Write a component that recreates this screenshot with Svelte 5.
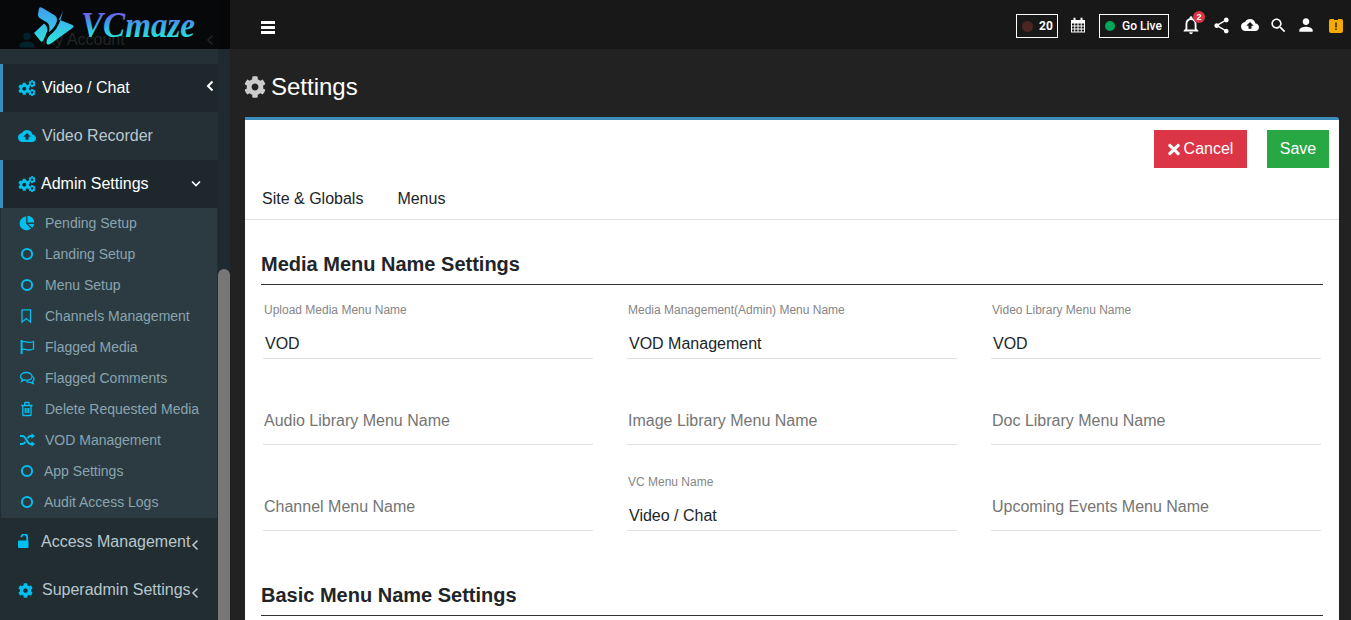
<script>
  const cog =
    "M487.4 315.7l-42.6-24.6c4.3-23.2 4.3-47 0-70.2l42.6-24.6c4.9-2.8 7.1-8.6 5.5-14-11.1-35.6-30-67.8-54.7-94.6-3.8-4.1-10-5.1-14.8-2.3L380.8 110c-17.9-15.4-38.5-27.3-60.8-35.1V25.8c0-5.6-3.9-10.5-9.4-11.7-36.7-8.2-74.3-7.8-109.2 0-5.5 1.2-9.4 6.1-9.4 11.7V75c-22.2 7.9-42.8 19.8-60.8 35.1L88.7 85.5c-4.9-2.8-11-1.9-14.8 2.3-24.7 26.7-43.6 58.9-54.7 94.6-1.7 5.4.6 11.2 5.5 14L67.3 221c-4.3 23.2-4.3 47 0 70.2l-42.6 24.6c-4.9 2.8-7.1 8.6-5.5 14 11.1 35.6 30 67.8 54.7 94.6 3.8 4.1 10 5.1 14.8 2.3l42.6-24.6c17.9 15.4 38.5 27.3 60.8 35.1v49.2c0 5.6 3.9 10.5 9.4 11.7 36.7 8.2 74.3 7.8 109.2 0 5.5-1.2 9.4-6.1 9.4-11.7v-49.2c22.2-7.9 42.8-19.8 60.8-35.1l42.6 24.6c4.9 2.8 11 1.9 14.8-2.3 24.7-26.7 43.6-58.9 54.7-94.6 1.5-5.5-.7-11.3-5.6-14.1zM256 336c-44.1 0-80-35.9-80-80s35.9-80 80-80 80 35.9 80 80-35.9 80-80 80z";
  const cloud =
    "M19.35 10.04C18.67 6.59 15.64 4 12 4 9.11 4 6.6 5.64 5.35 8.04 2.34 8.36 0 10.91 0 14c0 3.31 2.69 6 6 6h13c2.76 0 5-2.24 5-5 0-2.64-2.05-4.78-4.65-4.96zM14 13v4h-4v-4H7l5-5 5 5h-3z";

  const subItems = [
    { label: "Pending Setup", icon: "pie" },
    { label: "Landing Setup", icon: "ring" },
    { label: "Menu Setup", icon: "ring" },
    { label: "Channels Management", icon: "bookmark" },
    { label: "Flagged Media", icon: "flag" },
    { label: "Flagged Comments", icon: "comments" },
    { label: "Delete Requested Media", icon: "trash" },
    { label: "VOD Management", icon: "random" },
    { label: "App Settings", icon: "ring", tight: true },
    { label: "Audit Access Logs", icon: "ring", tight: true },
  ];

  const mediaFields = [
    { label: "Upload Media Menu Name", value: "VOD" },
    { label: "Media Management(Admin) Menu Name", value: "VOD Management" },
    { label: "Video Library Menu Name", value: "VOD" },
    { label: "Audio Library Menu Name" },
    { label: "Image Library Menu Name" },
    { label: "Doc Library Menu Name" },
    { label: "Channel Menu Name" },
    { label: "VC Menu Name", value: "Video / Chat" },
    { label: "Upcoming Events Menu Name" },
  ];
</script>

{#snippet cogs()}
  <svg class="nav-icon" viewBox="0 0 18 16" width="18" height="16" preserveAspectRatio="xMinYMid">
    <path transform="translate(0 2.5) scale(0.0245)" d={cog} />
    <path transform="translate(10.300 0) scale(0.0145)" d={cog} />
    <path transform="translate(10.300 8.800) scale(0.0145)" d={cog} />
  </svg>
{/snippet}

{#snippet chevronLeft()}
  <svg class="chev" viewBox="0 0 8 12" width="8" height="12">
    <path d="M6.5 1.5 2 6l4.5 4.5" />
  </svg>
{/snippet}

{#snippet subIcon(name)}
  <svg class="sub-icon" viewBox="0 0 16 16" width="16" height="16">
    {#if name === "pie"}
      <path class="solid" d="M7.200 1.600V8.700l4.800 4.700A6.800 6.800 0 1 1 7.200 1.600z" />
      <path class="solid" d="M8.500 .8a6.700 6.700 0 0 1 6.700 6.700H8.500z" />
      <path class="solid" d="M9.300 8.900h5.900a6.800 6.800 0 0 1-2 3.900z" />
    {:else if name === "ring"}
      <circle cx="8" cy="8" r="5.100" class="line thick" />
    {:else if name === "bookmark"}
      <path class="line" d="M3 1.800h8.500v12.400L7.250 10.600 3 14.200z" />
    {:else if name === "flag"}
      <path class="line thick" d="M2.600 1v14" />
      <path class="line" d="M2.600 3c2.600-1.400 5 .4 7.400.4 1.700 0 4.500-.9 4.500-.9v7.500s-2.500 1-4.500 1c-2.500 0-4.800-1.800-7.400-.4" />
    {:else if name === "comments"}
      <path class="line" d="M7.300 2.500c-3.400 0-5.800 1.800-5.800 3.900 0 1.200.8 2.300 2 3L2.600 11.300 5.400 10c.6.100 1.200.2 1.900.2 3.400 0 5.800-1.700 5.800-3.800S10.700 2.500 7.300 2.500z" />
      <path class="line" d="M13.400 6.500c1 .6 1.600 1.500 1.600 2.500 0 1-.6 1.900-1.500 2.500l.7 2-2.700-1.200c-1.500.2-3-.2-4-1.100" />
    {:else if name === "trash"}
      <path class="line" d="M3.800 4.500v9.300c0 .4.300.7.700.700h6.800c.4 0 .7-.3.7-.7V4.500M2.200 4.500h11.400M5.700 4.500V2.300c0-.4.200-.8.600-.8h3.200c.4 0 .6.400.6.800v2.200M6.200 7v5M7.900 7v5M9.600 7v5" />
    {:else if name === "random"}
      <path class="line thick" d="M1 4h2.500c3.500 0 4.500 8 8 8H13M1 12h2.500c1.300 0 2.200-1 3-2.300M8.500 6.300C9.300 5 10.200 4 11.500 4H13" />
      <path class="solid" d="M12.500 1.200 16 4l-3.500 2.800zM12.500 9.200 16 12l-3.500 2.800z" />
    {/if}
  </svg>
{/snippet}

<div class="app">
  <aside class="sidebar">
    <div class="brand">
      <svg viewBox="0 0 230 49" width="230" height="49">
        <defs>
          <linearGradient id="markFill" gradientUnits="userSpaceOnUse" x1="0" y1="8" x2="0" y2="45">
            <stop offset="0" stop-color="#3f9df0" />
            <stop offset="1" stop-color="#2ee6dc" />
          </linearGradient>
          <linearGradient id="wordFill" gradientUnits="userSpaceOnUse" x1="0" y1="12" x2="0" y2="38">
            <stop offset="0" stop-color="#7458e6" />
            <stop offset="0.5" stop-color="#38a8e8" />
            <stop offset="1" stop-color="#2ce4d4" />
          </linearGradient>
        </defs>
        <path fill="url(#markFill)" d="M39 8.500Q40 6.500 42.500 8L55 15.500Q58 18 56.500 22.500 54.500 28 49 32 50.500 25 47 22.500L39.500 18Q37.500 16.500 38 14z" />
        <path fill="url(#markFill)" d="M63.500 7.500Q62 15 58.800 19.500L72.500 25Q74.500 26.500 72.500 28L51 43.500Q46 46 46.500 41.500 47.500 36.500 52.500 33 60.500 26 63.500 7.500z" />
        <path fill="url(#markFill)" d="M34 33 44 23.500Q47.500 26 47.500 30.500L43.500 40Q42 43 40.500 41z" />
        <text x="81" y="37" class="word" fill="url(#wordFill)" textLength="114" lengthAdjust="spacingAndGlyphs">VCmaze</text>
      </svg>
    </div>

    <nav class="nav">
      <a class="item plain">
        <svg class="nav-icon" viewBox="0 0 24 24" width="18" height="18" preserveAspectRatio="xMinYMid"><path d="M12 12c2.800 0 5-2.200 5-5s-2.200-5-5-5-5 2.200-5 5 2.200 5 5 5zm0 2c-3.300 0-10 1.700-10 5v3h20v-3c0-3.300-6.700-5-10-5z" /></svg>
        <span class="text">My Account</span>
        {@render chevronLeft()}
      </a>
      <a class="item open">
        {@render cogs()}
        <span class="text">Video / Chat</span>
        <span class="chev-up">{@render chevronLeft()}</span>
      </a>
      <a class="item plain">
        <svg class="nav-icon" viewBox="0 0 24 24" width="18" height="18" preserveAspectRatio="xMinYMid"><path d={cloud} /></svg>
        <span class="text">Video Recorder</span>
      </a>
      <a class="item open snug">
        {@render cogs()}
        <span class="text">Admin Settings</span>
        <svg class="chev down" viewBox="0 0 12 8" width="12" height="8"><path d="M2 1.500 6 5.500l4-4" /></svg>
      </a>
      <ul class="sub">
        {#each subItems as sub}
          <li class:tight={sub.tight}>{@render subIcon(sub.icon)}<span>{sub.label}</span></li>
        {/each}
      </ul>
      <a class="item snug">
        <svg class="nav-icon" viewBox="0 0 18 16" width="18" height="16" preserveAspectRatio="xMinYMid">
          <path d="M1 6.500h8.500a1 1 0 0 1 1 1V13a1 1 0 0 1-1 1H1a1 1 0 0 1-1-1V7.500a1 1 0 0 1 1-1z" />
          <path class="shackle" d="M3.400 3.200a2.900 2.900 0 0 1 5.800 0v3.800" />
        </svg>
        <span class="text">Access Management</span>
        <span class="chev-low">{@render chevronLeft()}</span>
      </a>
      <a class="item">
        <svg class="nav-icon" viewBox="0 0 512 512" width="18" height="15" preserveAspectRatio="xMinYMid"><path d={cog} /></svg>
        <span class="text">Superadmin Settings</span>
        <span class="chev-low">{@render chevronLeft()}</span>
      </a>
    </nav>
    <div class="scrollbar"><div class="thumb"></div></div>
  </aside>

  <div class="main">
    <header class="topbar">
      <button class="burger" aria-label="Menu"><span></span><span></span><span></span></button>
      <div class="tools">
        <div class="pill count"><i class="dot off"></i>20</div>
        <svg class="tool calendar" viewBox="0 0 16 16" width="16" height="16">
          <path fill="#fff" d="M1 3h14v12.500H1z" />
          <path fill="#fff" d="M3.500 .8h2v3h-2zM10.500 .8h2v3h-2z" />
          <path fill="#181818" d="M2 6.500h2.300v2H2zM5.200 6.500h2.300v2H5.200zM8.500 6.500h2.300v2H8.500zM11.700 6.500H14v2h-2.300zM2 9.500h2.300v2H2zM5.200 9.500h2.300v2H5.200zM8.500 9.500h2.300v2H8.500zM11.700 9.500H14v2h-2.300zM2 12.500h2.300v2H2zM5.200 12.500h2.300v2H5.200zM8.500 12.500h2.300v2H8.500zM11.700 12.500H14v2h-2.300z" />
        </svg>
        <div class="pill live"><i class="dot on"></i>Go Live</div>
        <div class="bell">
          <svg class="tool" viewBox="0 0 24 24" width="22" height="22"><path d="M12 22c1.100 0 2-.9 2-2h-4c0 1.100.9 2 2 2zm6-6v-5c0-3.070-1.630-5.640-4.500-6.320V4c0-.83-.67-1.500-1.500-1.500s-1.500.67-1.500 1.500v.68C7.640 5.360 6 7.920 6 11v5l-2 2v1h16v-1l-2-2zm-2 1H8v-6c0-2.480 1.510-4.500 4-4.500s4 2.020 4 4.500v6z" /></svg>
          <b class="badge">2</b>
        </div>
        <svg class="tool" viewBox="0 0 24 24" width="19" height="19"><path d="M18 16.080c-.76 0-1.440.3-1.960.77L8.910 12.700c.05-.23.09-.46.09-.7s-.04-.47-.09-.7l7.050-4.110c.54.5 1.250.81 2.040.81 1.660 0 3-1.340 3-3s-1.340-3-3-3-3 1.340-3 3c0 .24.04.47.09.7L8.040 9.810C7.500 9.310 6.790 9 6 9c-1.660 0-3 1.340-3 3s1.340 3 3 3c.79 0 1.500-.31 2.040-.81l7.120 4.160c-.05.21-.08.43-.08.65 0 1.610 1.310 2.920 2.920 2.920s2.920-1.310 2.920-2.920-1.310-2.920-2.920-2.920z" /></svg>
        <svg class="tool" viewBox="0 0 24 24" width="18" height="18"><path d={cloud} /></svg>
        <svg class="tool" viewBox="0 0 24 24" width="19" height="19"><path d="M15.500 14h-.79l-.28-.27C15.410 12.590 16 11.110 16 9.500 16 5.910 13.090 3 9.500 3S3 5.910 3 9.500 5.910 16 9.500 16c1.610 0 3.090-.59 4.230-1.570l.27.28v.79l5 4.990L20.490 19l-4.990-5zm-6 0C7.010 14 5 11.990 5 9.500S7.010 5 9.500 5 14 7.010 14 9.500 11.990 14 9.500 14z" /></svg>
        <svg class="tool person" viewBox="0 0 24 24" width="20" height="20"><path d="M12 12c2.210 0 4-1.790 4-4s-1.790-4-4-4-4 1.790-4 4 1.790 4 4 4zm0 2c-2.670 0-8 1.340-8 4v2h16v-2c0-2.660-5.330-4-8-4z" /></svg>
        <svg class="notice" viewBox="0 0 14 15" width="14" height="15">
          <path fill="#f5ab00" d="M2 1h3v1h4V1h3a2 2 0 0 1 2 2v10a2 2 0 0 1-2 2H2a2 2 0 0 1-2-2V3a2 2 0 0 1 2-2z" />
          <path fill="#3a2c00" d="M6.200 4.500h1.600v5H6.200zM6.200 10.500h1.600V12H6.200z" />
        </svg>
      </div>
    </header>

    <main class="page">
      <h1>
        <svg viewBox="0 0 512 512" width="22" height="22"><path d={cog} /></svg>
        Settings
      </h1>
      <section class="card">
        <div class="actions">
          <button class="btn cancel">
            <svg viewBox="0 0 352 512" width="12" height="17"><path d="M242.720 256l100.070-100.070c12.280-12.280 12.280-32.190 0-44.480l-22.240-22.240c-12.280-12.280-32.190-12.280-44.480 0L176 189.280 75.930 89.210c-12.280-12.280-32.190-12.280-44.480 0L9.210 111.450c-12.280 12.280-12.280 32.190 0 44.480L109.280 256 9.210 356.070c-12.280 12.280-12.280 32.190 0 44.480l22.240 22.240c12.280 12.280 32.200 12.280 44.480 0L176 322.720l100.070 100.070c12.280 12.280 32.200 12.280 44.480 0l22.240-22.240c12.280-12.280 12.280-32.190 0-44.480L242.720 256z" /></svg>
            Cancel
          </button>
          <button class="btn save">Save</button>
        </div>
        <div class="tabs">
          <span>Site &amp; Globals</span>
          <span>Menus</span>
        </div>
        <div class="body">
          <h2>Media Menu Name Settings</h2>
          <div class="grid">
            {#each mediaFields as field}
              <div class="field">
                {#if field.value}
                  <label>{field.label}</label>
                  <div class="value">{field.value}</div>
                {:else}
                  <label class="rest">{field.label}</label>
                {/if}
              </div>
            {/each}
          </div>
          <h2 class="second">Basic Menu Name Settings</h2>
        </div>
      </section>
    </main>
  </div>
</div>

<style>
  :global(body) {
    margin: 0;
    background: #222;
    overflow: hidden;
  }
  .app {
    display: flex;
    height: 620px;
    overflow: hidden;
    font-family: "Liberation Sans", Arial, sans-serif;
  }

  /* sidebar */
  .sidebar {
    position: relative;
    display: flex;
    flex: 0 0 230px;
    height: 620px;
    overflow: hidden;
    background: #222d32;
  }
  .brand {
    position: absolute;
    top: 0;
    left: 0;
    z-index: 2;
    width: 230px;
    height: 49px;
    background: rgba(0, 0, 0, 0.82);
  }
  .brand svg {
    display: block;
  }
  .word {
    font-family: "Liberation Serif", serif;
    font-style: italic;
    font-weight: 700;
    font-size: 35px;
  }
  .nav {
    flex: 1;
    padding-top: 16px;
    min-width: 0;
  }
  .item {
    display: flex;
    align-items: center;
    height: 48px;
    padding-left: 18px;
    color: #b8c7ce;
    font-size: 16px;
    white-space: nowrap;
  }
  .item.plain {
    background: #252f36;
  }
  .item.open {
    background: #1e282c;
    border-left: 3px solid #3c8dbc;
    padding-left: 15px;
    color: #fff;
  }
  .nav-icon {
    flex: none;
    fill: #00c0ef;
    margin-right: 6px;
    width: 18px;
  }
  .snug .nav-icon {
    margin-right: 5px;
  }
  .shackle {
    fill: none;
    stroke: #00c0ef;
    stroke-width: 1.800;
  }
  .text {
    flex: 1;
  }
  .chev {
    fill: none;
    stroke: #b8c7ce;
    stroke-width: 1.600;
    margin-right: 4px;
  }
  .chev.down {
    stroke: #fff;
    margin-right: 16px;
  }
  .chev-up {
    display: flex;
    margin-bottom: 4px;
  }
  .chev-up .chev {
    stroke: #fff;
    stroke-width: 2;
  }
  .chev-low {
    display: flex;
    margin-top: 6px;
    margin-right: 15px;
  }
  .sub {
    list-style: none;
    margin: 0 1px 0 1px;
    padding: 0;
    background: #2c3b41;
  }
  .sub li {
    display: flex;
    align-items: center;
    height: 31px;
    box-sizing: border-box;
    padding: 0 0 2px 18px;
    color: #8aa4af;
    font-size: 14px;
  }
  .sub-icon {
    flex: none;
    margin-right: 10px;
  }
  .tight .sub-icon {
    margin-right: 9px;
  }
  .solid {
    fill: #00c0ef;
  }
  .line {
    fill: none;
    stroke: #00c0ef;
    stroke-width: 1.300;
  }
  .line.thick {
    stroke-width: 2;
  }
  .scrollbar {
    flex: 0 0 12px;
    background: #1f2a30;
  }
  .thumb {
    margin-top: 269px;
    height: 351px;
    background: #777;
    border-radius: 6px 6px 0 0;
  }

  /* top bar */
  .main {
    flex: 1;
    min-width: 0;
  }
  .topbar {
    display: flex;
    align-items: center;
    justify-content: space-between;
    height: 49px;
    padding: 3px 8px 0 31px;
    box-sizing: border-box;
    background: #181818;
  }
  .burger {
    display: flex;
    flex-direction: column;
    gap: 2px;
    width: 14px;
    margin-top: 2px;
    padding: 0;
    border: 0;
    background: none;
  }
  .burger span {
    height: 3px;
    background: #fff;
  }
  .tools {
    display: flex;
    align-items: center;
    gap: 10px;
  }
  .tool {
    fill: #fff;
    flex: none;
    margin-top: -2px;
  }
  .calendar {
    margin-left: 2px;
    margin-right: 3px;
  }
  .person {
    margin-left: -2px;
  }
  .notice {
    margin-left: 3px;
    margin-top: -2px;
  }
  .pill {
    display: flex;
    align-items: center;
    height: 24px;
    box-sizing: border-box;
    border: 1px solid #fff;
    color: #fff;
    font: 500 12px Roboto, sans-serif;
    padding: 0 5px;
  }
  .pill.count {
    width: 42px;
    font-weight: 700;
  }
  .pill.live {
    width: 70px;
  }
  .dot {
    flex: none;
    width: 10px;
    height: 10px;
    border-radius: 50%;
    margin-right: 7px;
  }
  .count .dot {
    width: 11px;
    height: 11px;
    margin-right: 6px;
  }
  .dot.off {
    background: #4a2522;
  }
  .dot.on {
    background: #00a65a;
  }
  .bell {
    position: relative;
    display: flex;
    margin-left: 1px;
  }
  .badge {
    position: absolute;
    top: -5px;
    right: -3px;
    width: 12px;
    height: 12px;
    border-radius: 50%;
    background: #dc3545;
    color: #fff;
    font-size: 9px;
    line-height: 12px;
    text-align: center;
  }

  /* page */
  .page {
    padding: 0 12px 0 15px;
  }
  h1 {
    display: flex;
    align-items: center;
    gap: 5px;
    margin: 0;
    height: 68px;
    padding-top: 8px;
    box-sizing: border-box;
    color: #fff;
    font-size: 24px;
    font-weight: 400;
  }
  h1 svg {
    fill: #ccc;
    margin-left: -1px;
  }
  .card {
    min-height: 520px;
    background: #fff;
    border-top: 3px solid #3c8dbc;
    border-top-right-radius: 3px;
  }
  .actions {
    display: flex;
    justify-content: flex-end;
    gap: 20px;
    padding: 10px 10px 0 0;
  }
  .btn {
    display: flex;
    align-items: center;
    justify-content: center;
    gap: 4px;
    height: 38px;
    border: 0;
    color: #fff;
    font: 16px "Liberation Sans", Arial, sans-serif;
  }
  .btn svg {
    fill: #fff;
  }
  .cancel {
    width: 93px;
    background: #dc3545;
  }
  .save {
    width: 62px;
    background: #28a745;
  }
  .tabs {
    display: flex;
    gap: 34px;
    height: 52px;
    padding: 12px 0 0 17px;
    box-sizing: border-box;
    border-bottom: 1px solid #e0e0e0;
    color: #212529;
    font-size: 16px;
    line-height: 37px;
  }
  .body {
    padding: 0 16px;
  }
  h2 {
    margin: 30px 0 0;
    height: 35px;
    box-sizing: border-box;
    border-bottom: 1px solid #333;
    color: #212529;
    font-size: 20px;
    line-height: 28px;
  }
  h2.second {
    margin-top: 50px;
  }
  .grid {
    display: grid;
    grid-template-columns: repeat(3, 330px);
    grid-auto-rows: 86px;
    column-gap: 34px;
    padding-left: 2px;
    margin-top: -12px;
  }
  .field {
    display: flex;
    flex-direction: column;
    justify-content: flex-end;
    border-bottom: 1px solid #e0e0e0;
    padding-left: 1px;
  }
  label {
    color: #868686;
    font-size: 12px;
  }
  label.rest {
    color: #757575;
    font-size: 16px;
    padding-bottom: 14px;
  }
  .value {
    margin-top: 15px;
    padding-left: 1px;
    color: #212529;
    font-size: 16px;
    line-height: 24px;
    padding-bottom: 2px;
  }
</style>
